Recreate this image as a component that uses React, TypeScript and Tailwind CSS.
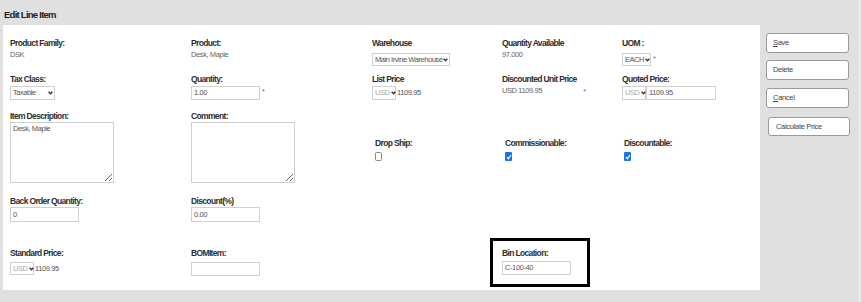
import React from "react";

function Chev() {
  return (
    <svg width="5" height="4" viewBox="0 0 5 4" className="shrink-0 ml-[1px]">
      <path d="M0.6 0.8 L2.5 2.8 L4.4 0.8" fill="none" stroke="#333" strokeWidth="1.3" />
    </svg>
  );
}

function Label({ children }: { children: React.ReactNode }) {
  return (
    <div className="text-[8.5px] leading-[10px] font-bold tracking-[-0.65px] text-[#2e2e2e] whitespace-nowrap">{children}</div>
  );
}

function Value({ children }: { children: React.ReactNode }) {
  return <div className="text-[7.5px] leading-[10px] tracking-[-0.4px] text-[#666] whitespace-nowrap">{children}</div>;
}

function Sel({ text, cls, dim }: { text: string; cls: string; dim?: boolean }) {
  return (
    <div
      className={
        "flex items-center justify-between border border-[#d0d0d0] bg-white pl-[2px] pr-[1px] text-[7.5px] leading-[10px] tracking-[-0.45px] whitespace-nowrap " +
        (dim ? "text-[#aaa] " : "text-[#555] ") +
        cls
      }
    >
      <span>{text}</span>
      <Chev />
    </div>
  );
}

function Inp({ text, cls }: { text?: string; cls: string }) {
  return (
    <div
      className={
        "flex items-center border border-[#d0d0d0] bg-white px-[2px] text-[7.5px] leading-[10px] tracking-[-0.4px] text-[#555] " +
        cls
      }
    >
      {text}
    </div>
  );
}

function Star() {
  return <span className="text-[7px] leading-[8px] text-[#5a4dff] ml-[2px] self-start mt-[2px]">*</span>;
}

function Check({ on }: { on?: boolean }) {
  if (on)
    return (
      <div className="w-[7px] h-[9px] rounded-[1px] bg-[#1a73e8] flex items-center justify-center">
        <svg width="6" height="6" viewBox="0 0 6 6">
          <path d="M1 3.2 L2.4 4.7 L5 1" fill="none" stroke="#fff" strokeWidth="1.2" />
        </svg>
      </div>
    );
  return <div className="w-[7px] h-[9px] rounded-[1.5px] border border-[#888] bg-white" />;
}

function Btn({ children, cls }: { children: React.ReactNode; cls: string }) {
  return (
    <div
      className={
        "flex items-center border border-[#9a9a9a] rounded-[3px] bg-white text-[7.5px] leading-[10px] tracking-[-0.3px] text-[#444] " +
        cls
      }
    >
      {children}
    </div>
  );
}

const row = "grid grid-cols-[181px_181px_130px_120px_1fr]";
const ta =
  "block mt-[1px] w-[104px] h-[61px] border border-[#d0d0d0] px-[2px] py-[1px] text-[7.5px] leading-[10px] tracking-[-0.4px] text-[#555] outline-none";

export default function App() {
  return (
    <div className="w-[862px] h-[302px] bg-[#e0e0e0] flex font-['Liberation_Sans',Arial,sans-serif] overflow-hidden">
      <div className="w-[859px] flex flex-col">
        <div className="h-[25px] pl-[4px] pt-[10px] text-[9.5px] leading-[10px] font-bold tracking-[-0.75px] text-[#222]">
          Edit Line Item
        </div>
        <div className="flex">
          <div className="ml-[3px] w-[757px] h-[265px] bg-white pl-[7px] pt-[13px]">
            {/* Row 1 */}
            <div className={row + " h-[36px]"}>
              <div>
                <Label>Product Family:</Label>
                <div className="mt-[2px]"><Value>DSK</Value></div>
              </div>
              <div>
                <Label>Product:</Label>
                <div className="mt-[2px]"><Value>Desk, Maple</Value></div>
              </div>
              <div>
                <Label>Warehouse</Label>
                <Sel text="Main Irvine Warehouse" cls="mt-[5px] w-[78px] h-[13px]" />
              </div>
              <div>
                <Label>Quantity Available</Label>
                <div className="mt-[2px]"><Value>97.000</Value></div>
              </div>
              <div>
                <Label>UOM :</Label>
                <div className="flex mt-[5px]">
                  <Sel text="EACH" cls="w-[29px] h-[13px] text-[#333]" />
                  <Star />
                </div>
              </div>
            </div>
            {/* Row 2 */}
            <div className={row + " h-[37px]"}>
              <div>
                <Label>Tax Class:</Label>
                <Sel text="Taxable" cls="mt-[2px] w-[45px] h-[14px]" />
              </div>
              <div>
                <Label>Quantity:</Label>
                <div className="flex mt-[2px]">
                  <Inp text="1.00" cls="w-[69px] h-[14px]" />
                  <Star />
                </div>
              </div>
              <div>
                <Label>List Price</Label>
                <div className="flex items-center mt-[2px]">
                  <Sel text="USD" dim cls="w-[24px] h-[14px]" />
                  <span className="ml-[1px] text-[7.5px] leading-[10px] tracking-[-0.4px] text-[#555]">1109.95</span>
                </div>
              </div>
              <div>
                <Label>Discounted Unit Price</Label>
                <div className="flex mt-[2px] w-[84px] justify-between">
                  <Value>USD 1109.95</Value>
                  <Star />
                </div>
              </div>
              <div>
                <Label>Quoted Price:</Label>
                <div className="flex mt-[2px]">
                  <Sel text="USD" dim cls="w-[24px] h-[14px]" />
                  <Inp text="1109.95" cls="w-[70px] h-[14px]" />
                </div>
              </div>
            </div>
            {/* Row 3 */}
            <div className={row + " h-[85px]"}>
              <div>
                <Label>Item Description:</Label>
                <textarea readOnly defaultValue="Desk, Maple" className={ta} />
              </div>
              <div>
                <Label>Comment:</Label>
                <textarea readOnly className={ta} />
              </div>
              <div className="pt-[27px] pl-[3px]">
                <Label>Drop Ship:</Label>
                <div className="mt-[4px]"><Check /></div>
              </div>
              <div className="pt-[27px] pl-[3px]">
                <Label>Commissionable:</Label>
                <div className="mt-[4px]"><Check on /></div>
              </div>
              <div className="pt-[27px] pl-[2px]">
                <Label>Discountable:</Label>
                <div className="mt-[4px]"><Check on /></div>
              </div>
            </div>
            {/* Row 4 */}
            <div className={row + " h-[42px]"}>
              <div>
                <Label>Back Order Quantity:</Label>
                <Inp text="0" cls="mt-[1px] w-[69px] h-[15px]" />
              </div>
              <div>
                <Label>Discount(%)</Label>
                <Inp text="0.00" cls="mt-[1px] w-[69px] h-[15px]" />
              </div>
              <div />
              <div />
              <div />
            </div>
            {/* Row 5 */}
            <div className={row}>
              <div className="pt-[10px]">
                <Label>Standard Price:</Label>
                <div className="flex items-center mt-[4px]">
                  <Sel text="USD" dim cls="w-[24px] h-[13px]" />
                  <span className="ml-[1px] text-[7.5px] leading-[10px] tracking-[-0.4px] text-[#555]">1109.95</span>
                </div>
              </div>
              <div className="pt-[10px]">
                <Label>BOMItem:</Label>
                <Inp cls="mt-[4px] w-[69px] h-[14px]" />
              </div>
              <div />
              <div className="-ml-[12px] w-[100px] h-[49px] border-[3px] border-black pl-[9px] pt-[7px]">
                <Label>Bin Location:</Label>
                <Inp text="C-100-40" cls="mt-[3px] w-[69px] h-[14px]" />
              </div>
              <div />
            </div>
          </div>
          <div className="ml-[6px] flex flex-col">
            <Btn cls="mt-[8px] w-[83px] h-[20px] pl-[6px]">
              <span><span className="underline">S</span>ave</span>
            </Btn>
            <Btn cls="mt-[7px] w-[83px] h-[20px] pl-[6px]">Delete</Btn>
            <Btn cls="mt-[8px] w-[83px] h-[20px] pl-[6px]">
              <span><span className="underline">C</span>ancel</span>
            </Btn>
            <Btn cls="mt-[9px] ml-[2px] w-[82px] h-[19px] pl-[7px]">Calculate Price</Btn>
          </div>
        </div>
      </div>
      <div className="w-[1px] bg-[#f6f6f6]" />
      <div className="flex-1" />
    </div>
  );
}
